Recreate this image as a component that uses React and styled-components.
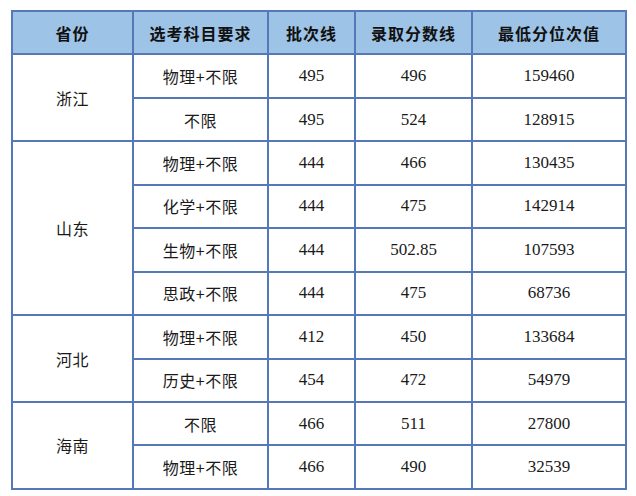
import React from "react";
import styled, { createGlobalStyle } from "styled-components";

const Global = createGlobalStyle`
  html, body { margin: 0; padding: 0; background: #ffffff; }
  body { font-family: "Liberation Serif", "Noto Sans CJK SC", serif; }
`;

const Page = styled.div`
  padding: 10px 0 0 11px;
`;

const Table = styled.table`
  border-collapse: collapse;
  table-layout: fixed;
  width: 614px;
  border: 2px solid #5478b8;
`;

const Row = styled.tr`
  height: 43.45px;
`;

const HeadCell = styled.th`
  background: #9dc3e6;
  border: 2px solid #5478b8;
  font-family: "Noto Sans CJK SC", sans-serif;
  font-weight: 700;
  font-size: 16px;
  letter-spacing: 1px;
  color: #111;
  text-align: center;
  vertical-align: middle;
  padding: 0;
`;

const Cell = styled.td`
  border: 2px solid #5478b8;
  font-family: ${(p) =>
    p.$num ? `"Liberation Serif", serif` : `"Noto Sans CJK SC", sans-serif`};
  font-weight: 400;
  font-size: ${(p) => (p.$num ? "17px" : "16px")};
  color: #1a1a1a;
  text-align: center;
  vertical-align: middle;
  padding: 0;
  letter-spacing: ${(p) => (p.$num ? "0" : "0.5px")};
`;

const columns = [
  { label: "省份", width: 121 },
  { label: "选考科目要求", width: 135 },
  { label: "批次线", width: 87 },
  { label: "录取分数线", width: 117 },
  { label: "最低分位次值", width: 154 },
];

const groups = [
  {
    province: "浙江",
    rows: [
      ["物理+不限", "495", "496", "159460"],
      ["不限", "495", "524", "128915"],
    ],
  },
  {
    province: "山东",
    rows: [
      ["物理+不限", "444", "466", "130435"],
      ["化学+不限", "444", "475", "142914"],
      ["生物+不限", "444", "502.85", "107593"],
      ["思政+不限", "444", "475", "68736"],
    ],
  },
  {
    province: "河北",
    rows: [
      ["物理+不限", "412", "450", "133684"],
      ["历史+不限", "454", "472", "54979"],
    ],
  },
  {
    province: "海南",
    rows: [
      ["不限", "466", "511", "27800"],
      ["物理+不限", "466", "490", "32539"],
    ],
  },
];

export default function App() {
  return (
    <Page>
      <Global />
      <Table>
        <colgroup>
          {columns.map((c) => (
            <col key={c.label} style={{ width: c.width }} />
          ))}
        </colgroup>
        <thead>
          <Row>
            {columns.map((c) => (
              <HeadCell key={c.label}>{c.label}</HeadCell>
            ))}
          </Row>
        </thead>
        <tbody>
          {groups.map((g) =>
            g.rows.map((r, i) => (
              <Row key={g.province + i}>
                {i === 0 && <Cell rowSpan={g.rows.length}>{g.province}</Cell>}
                <Cell>{r[0]}</Cell>
                <Cell $num>{r[1]}</Cell>
                <Cell $num>{r[2]}</Cell>
                <Cell $num>{r[3]}</Cell>
              </Row>
            ))
          )}
        </tbody>
      </Table>
    </Page>
  );
}
